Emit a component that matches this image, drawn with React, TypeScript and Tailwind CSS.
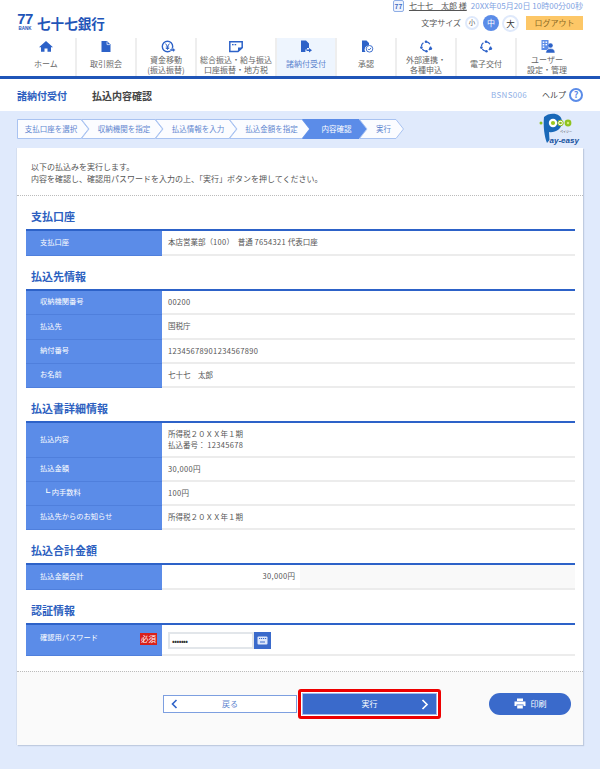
import React from "react";

const BLUE = "#2d62c8";

const Ic = ({ children }: { children: React.ReactNode }) => (
  <svg width="20" height="16" viewBox="0 0 20 16" fill={BLUE}>{children}</svg>
);

const Ring = () => (
  <Ic>
    <circle cx="10" cy="7.5" r="4.6" fill="none" stroke={BLUE} strokeWidth="1.3" strokeDasharray="4 3.2" />
    <circle cx="10" cy="2.8" r="1.3" />
    <circle cx="14.6" cy="9.6" r="1.5" />
    <circle cx="10.5" cy="12.3" r="1.2" />
    <circle cx="5.4" cy="8.6" r="1.3" />
  </Ic>
);

const navItems: { label: string[]; w: string; active?: boolean; icon: React.ReactNode }[] = [
  {
    label: ["ホーム"], w: "w-[60px]",
    icon: <Ic><path d="M10 2 L17 8.2 H15 V12.8 H11.5 V9.5 H8.5 V12.8 H5 V8.2 H3 Z" /></Ic>,
  },
  {
    label: ["取引照会"], w: "w-[60px]",
    icon: <Ic><path d="M5.5 2 H11 L14.5 5.5 V13 H5.5 Z" /><path d="M11 2.5 V5.6 H14" fill="none" stroke="#fff" strokeWidth="0.7" /></Ic>,
  },
  {
    label: ["資金移動", "(振込振替)"], w: "w-[60px]",
    icon: <Ic>
      <circle cx="11.5" cy="7.5" r="5.2" fill="none" stroke={BLUE} strokeWidth="1.4" />
      <path d="M9.6 4.6 L11.5 7.6 L13.4 4.6 M11.5 7.6 V10.8 M9.8 8 H13.2 M9.8 9.4 H13.2" fill="none" stroke={BLUE} strokeWidth="1" />
      <path d="M14 10 H17 V8.8 L19.4 11 L17 13.2 V12 H14 Z" stroke="#fff" strokeWidth="0.4" />
    </Ic>,
  },
  {
    label: ["総合振込・給与振込", "口座振替・地方税"], w: "w-[80px]",
    icon: <Ic>
      <path d="M3.8 2.8 H16.2 V8.6 L12 12.4 H3.8 Z" fill="none" stroke={BLUE} strokeWidth="1.5" />
      <path d="M12 12.6 V8.6 H16.4 Z" />
      <rect x="6" y="5" width="1.6" height="1.3" /><rect x="8.6" y="5" width="1.6" height="1.3" />
    </Ic>,
  },
  {
    label: ["諸納付受付"], w: "w-[60px]", active: true,
    icon: <Ic><path d="M5 1.5 H10 L13 4.5 V9 H11 V10.6 H9.4 V13 H5 Z" /><path d="M10.5 10.4 H13 V9 L16 11.2 L13 13.4 V12 H10.5 Z" /></Ic>,
  },
  {
    label: ["承認"], w: "w-[60px]",
    icon: <Ic>
      <path d="M6 1.5 H10.5 L13 4 V6.5 A4 4 0 0 0 9.5 13 H6 Z" />
      <circle cx="13.5" cy="9.8" r="3.3" fill="#fff" stroke={BLUE} strokeWidth="0.9" />
      <path d="M12 9.8 L13.2 11 L15.1 8.9" fill="none" stroke={BLUE} strokeWidth="0.9" />
    </Ic>,
  },
  { label: ["外部連携・", "各種申込"], w: "w-[60px]", icon: <Ring /> },
  { label: ["電子交付"], w: "w-[60px]", icon: <Ring /> },
  {
    label: ["ユーザー", "設定・管理"], w: "w-[60px]",
    icon: <Ic>
      <rect x="4.5" y="1" width="7" height="10" fill="#5b8ce8" />
      <rect x="5.7" y="2.5" width="1.6" height="1.4" fill="#fff" /><rect x="8.5" y="2.5" width="1.6" height="1.4" fill="#fff" />
      <rect x="5.7" y="5" width="1.6" height="1.4" fill="#fff" /><rect x="8.5" y="5" width="1.6" height="1.4" fill="#fff" />
      <rect x="5.7" y="7.5" width="1.6" height="1.4" fill="#fff" />
      <circle cx="13.5" cy="6.5" r="2.3" />
      <path d="M8.8 14 C8.8 11 10.8 9.6 13.5 9.6 C16.2 9.6 18 11 18 14 Z" stroke="#fff" strokeWidth="0.5" />
    </Ic>,
  },
];

const steps = [
  { t: "支払口座を選択", w: 72, first: true },
  { t: "収納機関を指定", w: 82 },
  { t: "払込情報を入力", w: 82 },
  { t: "払込金額を指定", w: 81 },
  { t: "内容確認", w: 65, active: true },
  { t: "実行", w: 45 },
];

const Step = ({ t, w, first, active }: { t: string; w: number; first?: boolean; active?: boolean }) => {
  const tip = 8;
  const d = first
    ? `M0.5,0.5 H${w - tip} L${w - 0.5},10 L${w - tip},19.5 H0.5 Z`
    : `M0.5,0.5 H${w - tip} L${w - 0.5},10 L${w - tip},19.5 H0.5 L${tip},10 Z`;
  return (
    <div className={`relative h-5 flex items-center justify-center shrink-0 ${first ? "" : "-ml-2"}`} style={{ width: w }}>
      <svg width={w} height="20" className="absolute inset-0">
        <path d={d} fill={active ? "#5b8ce8" : "#fbfcff"} stroke={active ? "#5b8ce8" : "#a9c3f1"} />
      </svg>
      <span className={`relative text-[7.5px] ${first ? "pr-1" : "pl-1"} ${active ? "text-white" : "text-[#5f86cf]"}`}>{t}</span>
    </div>
  );
};

const PayEasy = () => (
  <svg width="46" height="33" viewBox="0 0 46 33" className="mt-[-7px]">
    <circle cx="4" cy="11" r="1.5" fill="#8fc31f" />
    <path d="M7 5 C12 0 25 0 25 10 C25 18 17 21 12 20 L12.5 28 L10 31 C7.5 25 6 14 7 5 Z" fill="#1968b8" />
    <circle cx="16" cy="11" r="4.2" fill="#fff" />
    <circle cx="16" cy="11" r="2.1" fill="#9cc81c" />
    <circle cx="23.5" cy="11" r="2.8" fill="#fff" stroke="#8fbd12" strokeWidth="1" />
    <circle cx="23.5" cy="11" r="1.3" fill="#8fbd12" />
    <circle cx="31" cy="11" r="3.4" fill="#8fc31f" />
    <circle cx="31" cy="11" r="1.2" fill="#d8ea80" />
    <text x="12.5" y="30.5" fontSize="8" fontWeight="700" fontStyle="italic" fill="#14509c" fontFamily="Liberation Sans, sans-serif">ay-easy</text>
    <text x="23" y="20.5" fontSize="3" fill="#333" fontFamily="Noto Sans CJK JP, sans-serif">ペイジー</text>
  </svg>
);

const Row = ({ h, th, children, badge, bodyClass }: { h: string; th: React.ReactNode; children: React.ReactNode; badge?: boolean; bodyClass?: string }) => (
  <div className={`flex ${h}`}>
    <div className={`w-[136px] shrink-0 bg-[#5b8ce8] border-b border-[#4f7fdc] flex items-center text-white text-[7.25px] pl-[14px] pr-[5px] pb-[1px] ${badge ? "justify-between" : ""}`}>
      {th}
    </div>
    <div className={`flex-1 border-b-2 border-[#ececec] flex items-center text-[7.5px] text-[#555] pb-[1px] ${bodyClass ?? "pl-[6px]"}`}>{children}</div>
  </div>
);

const Num = ({ children }: { children: React.ReactNode }) => <span className="tracking-[0.35px]">{children}</span>;

const Section = ({ title, children }: { title: string; children: React.ReactNode }) => (
  <section>
    <h2 className="h-[33px] pl-[5px] pt-[12px] text-[11px] leading-[16px] font-bold text-[#2d5fc0]">{title}</h2>
    <div className="border-t-2 border-[#2d62c8]">{children}</div>
  </section>
);

export default function App() {
  return (
    <div className="w-[600px] h-[769px] bg-[#e0eafc] overflow-hidden font-['Noto_Sans_CJK_JP','Liberation_Sans',sans-serif]">
      <header className="bg-white h-[79px] border-b-[3px] border-[#1f55b8] px-[17px] relative">
        <div className="flex justify-between h-[38px]">
          <div className="flex items-start pt-[13px] gap-[4px]">
            <div className="flex flex-col items-center w-[16px] text-[#1f55b8]">
              <span className="text-[15px] leading-[12px] font-bold tracking-[-0.5px] font-['Liberation_Sans',sans-serif]">77</span>
              <span className="text-[4.5px] leading-[5px] mt-[1px] font-bold font-['Liberation_Sans',sans-serif]">BANK</span>
            </div>
            <span className="text-[13.6px] leading-[16px] mt-[2px] font-bold text-[#1f55b8] whitespace-nowrap">七十七銀行</span>
          </div>
          <div className="flex flex-col items-end">
            <div className="flex items-center h-[12px] text-[8px] whitespace-nowrap">
              <span className="w-[11px] h-[12px] border border-[#8faee6] rounded-[2px] bg-[#eef3fd] text-[6.5px] leading-[10px] text-[#3d68c0] text-center mr-[5px] font-bold">77</span>
              <span className="underline text-[#555] mr-[4px]">七十七　太郎 様</span>
              <span className="text-[#7fa3e2]">20XX年05月20日 10時00分00秒</span>
            </div>
            <div className="flex items-center mt-[2px] h-[18px]">
              <span className="text-[8px] text-[#555] mr-[4px]">文字サイズ</span>
              <span className="w-[14px] h-[14px] rounded-full border-2 border-[#dfe9fb] text-[6.5px] text-[#555] flex items-center justify-center mr-[4px]">小</span>
              <span className="w-[16px] h-[16px] rounded-full bg-[#5b8ce8] text-[8px] text-white flex items-center justify-center mr-[3px]">中</span>
              <span className="w-[17px] h-[17px] rounded-full border-2 border-[#dfe9fb] text-[8.5px] text-[#333] flex items-center justify-center mr-[7px]">大</span>
              <span className="w-[57px] h-[14px] bg-[#fdc767] text-[8px] leading-[14px] text-center text-[#8c6a24]">ログアウト</span>
            </div>
          </div>
        </div>
        <nav className="flex h-[38px]">
          {navItems.map((n) => (
            <div key={n.label.join()} className={`${n.w} shrink-0 flex flex-col items-center border-r-2 border-[#eeeeee] last:border-r-0 ${n.active ? "bg-[#eef5fe] text-[#5f86cf]" : "text-[#666]"}`}>
              <div className="h-[17px] pt-[1px] flex items-start">{n.icon}</div>
              <div className="flex-1 flex flex-col justify-center text-[8px] leading-[9.5px] text-center whitespace-nowrap pb-[3px]">
                {n.label.map((l) => <span key={l}>{l}</span>)}
              </div>
            </div>
          ))}
        </nav>
      </header>

      <div className="bg-white h-[32px] flex items-center px-[17px]">
        <span className="text-[10px] font-bold text-[#2d5fc0] w-[75px]">諸納付受付</span>
        <span className="text-[10px] font-bold text-[#444]">払込内容確認</span>
        <span className="ml-auto text-[8px] text-[#8fb0e6] tracking-[0.3px] mr-[15px]">BSNS006</span>
        <span className="text-[8px] text-[#444] mr-[3px]">ヘルプ</span>
        <span className="w-[14px] h-[14px] rounded-full border-2 border-[#5b8ce8] text-[#5b8ce8] text-[9px] font-bold flex items-center justify-center">?</span>
      </div>

      <div className="h-[37px] px-[17px] pt-[8px] flex justify-between">
        <div className="flex">
          {steps.map((s) => <Step key={s.t} {...s} />)}
        </div>
        <PayEasy />
      </div>

      <main className="mx-[17px] bg-white shadow-[1px_1px_1px_#bfcbe0,-1px_0_0_#d5dff0] h-[597px] flex flex-col">
        <div className="h-[48px] border-b border-dotted border-[#bbb] pl-[14px] pt-[13px] text-[8px] leading-[12px] text-[#555]">
          <p>以下の払込みを実行します。</p>
          <p>内容を確認し、確認用パスワードを入力の上、「実行」ボタンを押してください。</p>
        </div>
        <div className="pl-[9px] pr-[8px] flex-1">
          <Section title="支払口座">
            <Row h="h-[25px]" th="支払口座"><span>本店営業部（<Num>100</Num>）　普通 <Num>7654321</Num> 代表口座</span></Row>
          </Section>
          <Section title="払込先情報">
            <Row h="h-[24px]" th="収納機関番号"><Num>00200</Num></Row>
            <Row h="h-[25px]" th="払込先">国税庁</Row>
            <Row h="h-[24px]" th="納付番号"><Num>12345678901234567890</Num></Row>
            <Row h="h-[24px]" th="お名前">七十七　太郎</Row>
          </Section>
          <Section title="払込書詳細情報">
            <Row h="h-[35px]" th="払込内容">
              <div className="leading-[11px]">所得税２０ＸＸ年１期<br />払込番号： <Num>12345678</Num></div>
            </Row>
            <Row h="h-[24px]" th="払込金額"><span><Num>30,000</Num>円</span></Row>
            <Row h="h-[24px]" th={<span className="pl-[3px]">┗ 内手数料</span>}><span><Num>100</Num>円</span></Row>
            <Row h="h-[24px]" th="払込先からのお知らせ">所得税２０ＸＸ年１期</Row>
          </Section>
          <Section title="払込合計金額">
            <Row h="h-[25px]" th="払込金額合計" bodyClass="pl-0 !pb-0">
              <div className="w-[138px] text-right pr-[5px] h-full flex items-center justify-end pb-[1px]"><span><Num>30,000</Num>円</span></div>
              <div className="flex-1 h-full bg-[#f9f9f9]" />
            </Row>
          </Section>
          <Section title="認証情報">
            <Row h="h-[31px]" badge th={<>
              <span className="pb-[3px]">確認用パスワード</span>
              <span className="w-[17px] h-[12px] bg-[#d9201a] text-white text-[7.5px] leading-[12px] text-center">必須</span>
            </>}>
              <div className="flex pt-[3px]">
                <div className="w-[86px] h-[17px] border-2 border-[#e2e6ea] bg-white text-[8px] leading-[13px] pl-[2px] text-[#333] tracking-[-0.5px]">•••••••</div>
                <div className="w-[17px] h-[17px] bg-[#3a6acb] flex items-center justify-center">
                  <svg width="11" height="9" viewBox="0 0 11 9">
                    <rect x="0.5" y="0.5" width="10" height="8" rx="1" fill="#dfe8fa" />
                    <rect x="2" y="2" width="1.2" height="1" fill="#3a6acb" /><rect x="4" y="2" width="1.2" height="1" fill="#3a6acb" /><rect x="6" y="2" width="1.2" height="1" fill="#3a6acb" /><rect x="8" y="2" width="1.2" height="1" fill="#3a6acb" />
                    <rect x="3" y="5.5" width="5" height="1" fill="#3a6acb" />
                  </svg>
                </div>
              </div>
            </Row>
          </Section>
        </div>
        <footer className="h-[75px] mt-[15px] bg-[#fafafa] border-t border-dotted border-[#bbb] flex items-start pt-[17px] pl-[146px]">
          <button className="w-[134px] h-[18px] mt-[6px] border border-[#7d9fe0] bg-white flex items-center relative text-[8px] text-[#5f86cf] justify-center">
            <svg width="7" height="10" viewBox="0 0 7 10" className="absolute left-[7px] top-[3px]"><path d="M5.5 1 L1.5 5 L5.5 9" fill="none" stroke={BLUE} strokeWidth="1.6" /></svg>
            戻る
          </button>
          <div className="ml-[1px] w-[143px] h-[30px] border-[3px] border-[#ee0000] rounded-[3px] p-[1px] bg-white">
            <button className="w-full h-full border border-[#a5bcea] bg-[#3a6acb] text-white text-[8px] flex items-center justify-center relative">
              実行
              <svg width="8" height="11" viewBox="0 0 8 11" className="absolute right-[7px] top-[5px]"><path d="M1.5 1 L6 5.5 L1.5 10" fill="none" stroke="#fff" strokeWidth="1.7" /></svg>
            </button>
          </div>
          <button className="ml-[48px] mt-[4px] w-[82px] h-[22px] rounded-full bg-[#3a6acb] text-white text-[8px] flex items-center justify-center gap-[5px]">
            <svg width="12" height="11" viewBox="0 0 12 11"><path d="M3 0.5 H9 V3 H3 Z M0.5 3.5 H11.5 V8 H9.5 V6.5 H2.5 V8 H0.5 Z M3.2 7.2 H8.8 V10.5 H3.2 Z" fill="#fff" /></svg>
            印刷
          </button>
        </footer>
      </main>
    </div>
  );
}
